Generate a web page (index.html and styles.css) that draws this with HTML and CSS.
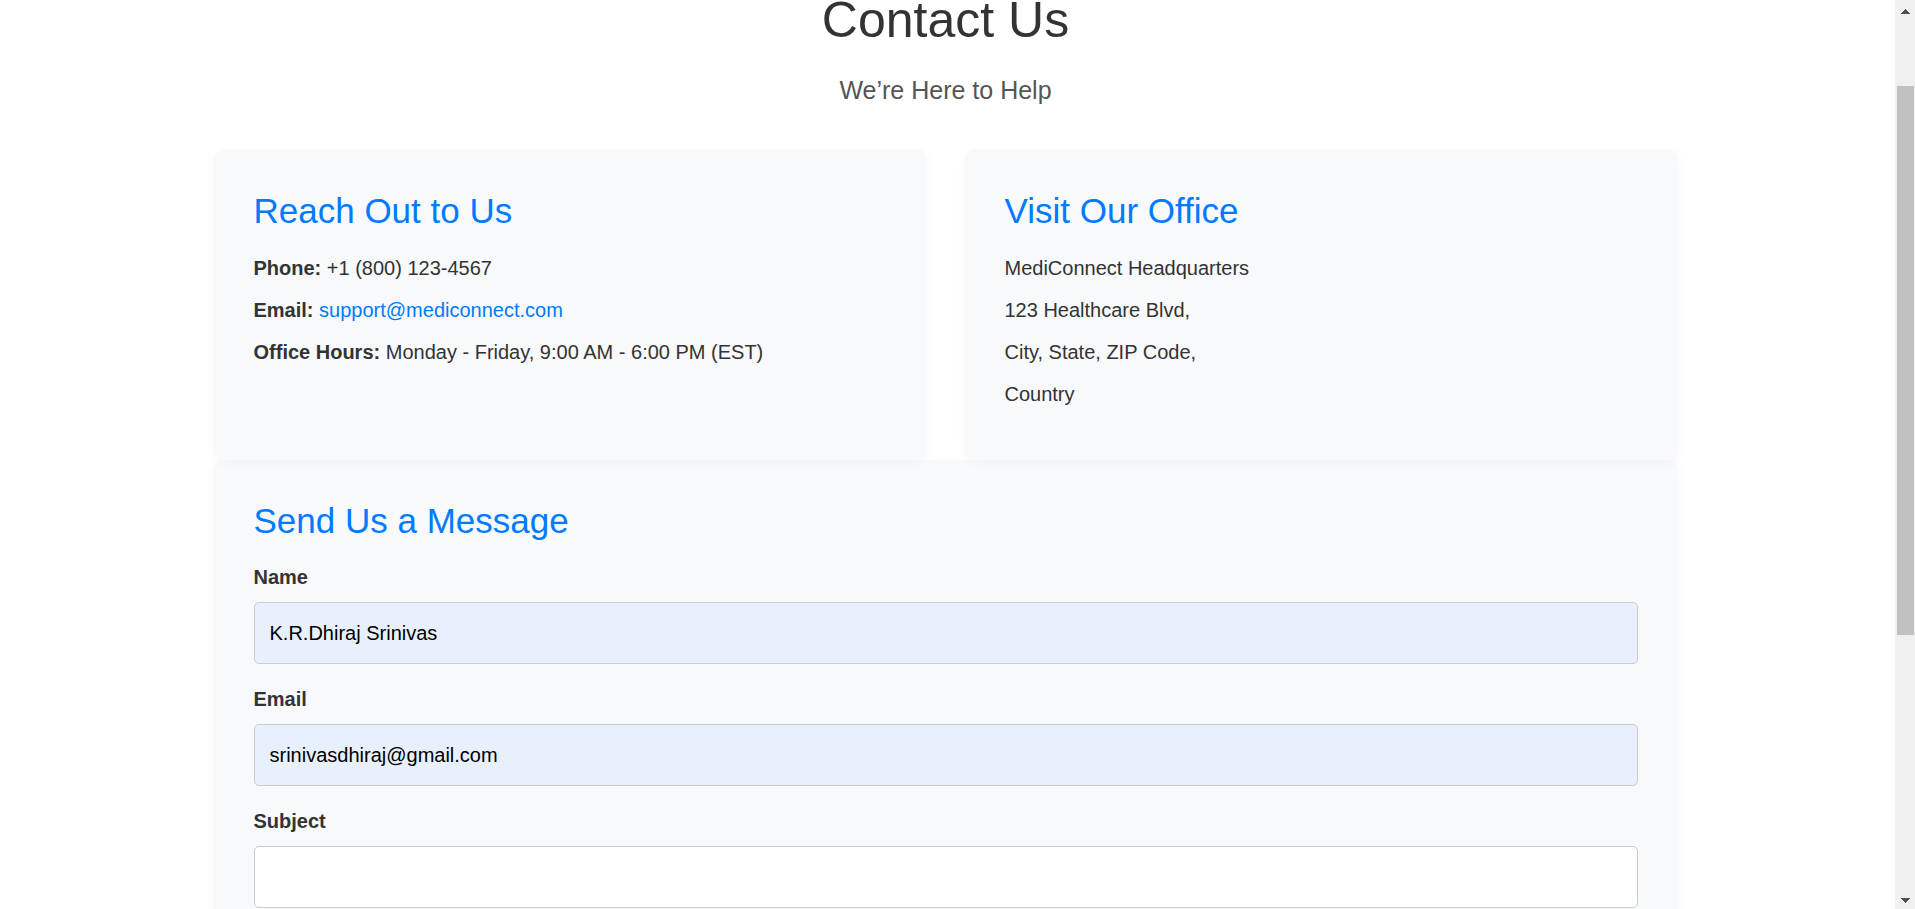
FILE: index.html
```html
<!DOCTYPE html>
<html lang="en">
<head>
<meta charset="utf-8">
<title>Contact Us</title>
<link rel="stylesheet" href="styles.css">
</head>
<body>
<div class="viewport">
  <main class="page">
    <div class="container">
      <header class="intro">
        <h1 class="title">Contact Us</h1>
        <p class="subtitle">We’re Here to Help</p>
      </header>
      <div class="cards">
        <section class="card">
          <h2 class="card-title">Reach Out to Us</h2>
          <p class="line"><strong>Phone:</strong> +1 (800) 123-4567</p>
          <p class="line"><strong>Email:</strong> <a class="link" href="mailto:support@mediconnect.com">support@mediconnect.com</a></p>
          <p class="line"><strong>Office Hours:</strong> Monday - Friday, 9:00 AM - 6:00 PM (EST)</p>
        </section>
        <section class="card">
          <h2 class="card-title">Visit Our Office</h2>
          <p class="line">MediConnect Headquarters</p>
          <p class="line">123 Healthcare Blvd,</p>
          <p class="line">City, State, ZIP Code,</p>
          <p class="line">Country</p>
        </section>
      </div>
      <section class="card">
        <h2 class="card-title">Send Us a Message</h2>
        <form class="form">
          <div class="field">
            <label class="label" for="name">Name</label>
            <input class="input filled" id="name" type="text" value="K.R.Dhiraj Srinivas">
          </div>
          <div class="field">
            <label class="label" for="email">Email</label>
            <input class="input filled" id="email" type="email" value="srinivasdhiraj@gmail.com">
          </div>
          <div class="field">
            <label class="label" for="subject">Subject</label>
            <input class="input" id="subject" type="text">
          </div>
        </form>
      </section>
    </div>
  </main>
  <div class="scrollbar" aria-hidden="true">
    <svg class="arrow" width="9" height="5" viewBox="0 0 9 5" shape-rendering="crispEdges"><path d="M4 0h1v1h1v1h1v1h1v1h1v1H0V4h1V3h1V2h1V1h1z" fill="#505050"/></svg>
    <div class="track"><div class="thumb"></div></div>
    <svg class="arrow" width="9" height="5" viewBox="0 0 9 5" shape-rendering="crispEdges"><path d="M0 0h9v1H8v1H7v1H6v1H5v1H4V4H3V3H2V2H1V1H0z" fill="#505050"/></svg>
  </div>
</div>
</body>
</html>
```

FILE: styles.css
```css
* { box-sizing: border-box; }

body {
  margin: 0;
  background: #fff;
  color: #333;
  font: 20px/32px "Liberation Sans", Arial, sans-serif;
}

h1, h2, p { margin: 0; font-weight: 400; }

.viewport {
  display: flex;
  height: 100vh;
  overflow: hidden;
}

.page {
  flex: 1;
  min-width: 0;
  padding-right: 4px;
}

.container {
  max-width: 1464px;
  margin: 0 auto;
}

.intro {
  display: flex;
  flex-direction: column;
  gap: 35px;
  margin-bottom: 45px;
  text-align: center;
}

.title { font-size: 50px; line-height: 40px; }

.subtitle { font-size: 25px; line-height: 30px; color: #555; }

.cards {
  display: grid;
  grid-template-columns: 1fr 1fr;
  gap: 38px;
}

.card {
  padding: 40px;
  border-radius: 10px;
  background: #f8f9fb;
  box-shadow: 0 2px 12px rgba(0, 0, 0, 0.03);
}

.card-title {
  margin-bottom: 20px;
  color: #007bff;
  font-size: 35px;
  line-height: 42px;
}

.line { margin-bottom: 10px; }

.link { color: #007bff; text-decoration: none; }

.form { display: grid; gap: 20px; }

.field { display: grid; gap: 10px; }

.label { font-weight: 700; line-height: 30px; }

.input {
  width: 100%;
  height: 62px;
  padding: 0 15px;
  border: 1px solid #ccc;
  border-radius: 5px;
  background: #fff;
  color: #000;
  font: inherit;
}

.filled { background: #e8f0fe; }

.scrollbar {
  display: flex;
  flex: 0 0 20px;
  flex-direction: column;
  align-items: center;
  gap: 7px;
  padding: 9px 0 6px;
  background: #f0f0f0;
}

.track {
  flex: 1;
  width: 17px;
  padding-top: 65px;
}

.thumb { height: 68.2%; background: #c1c1c1; }
```
